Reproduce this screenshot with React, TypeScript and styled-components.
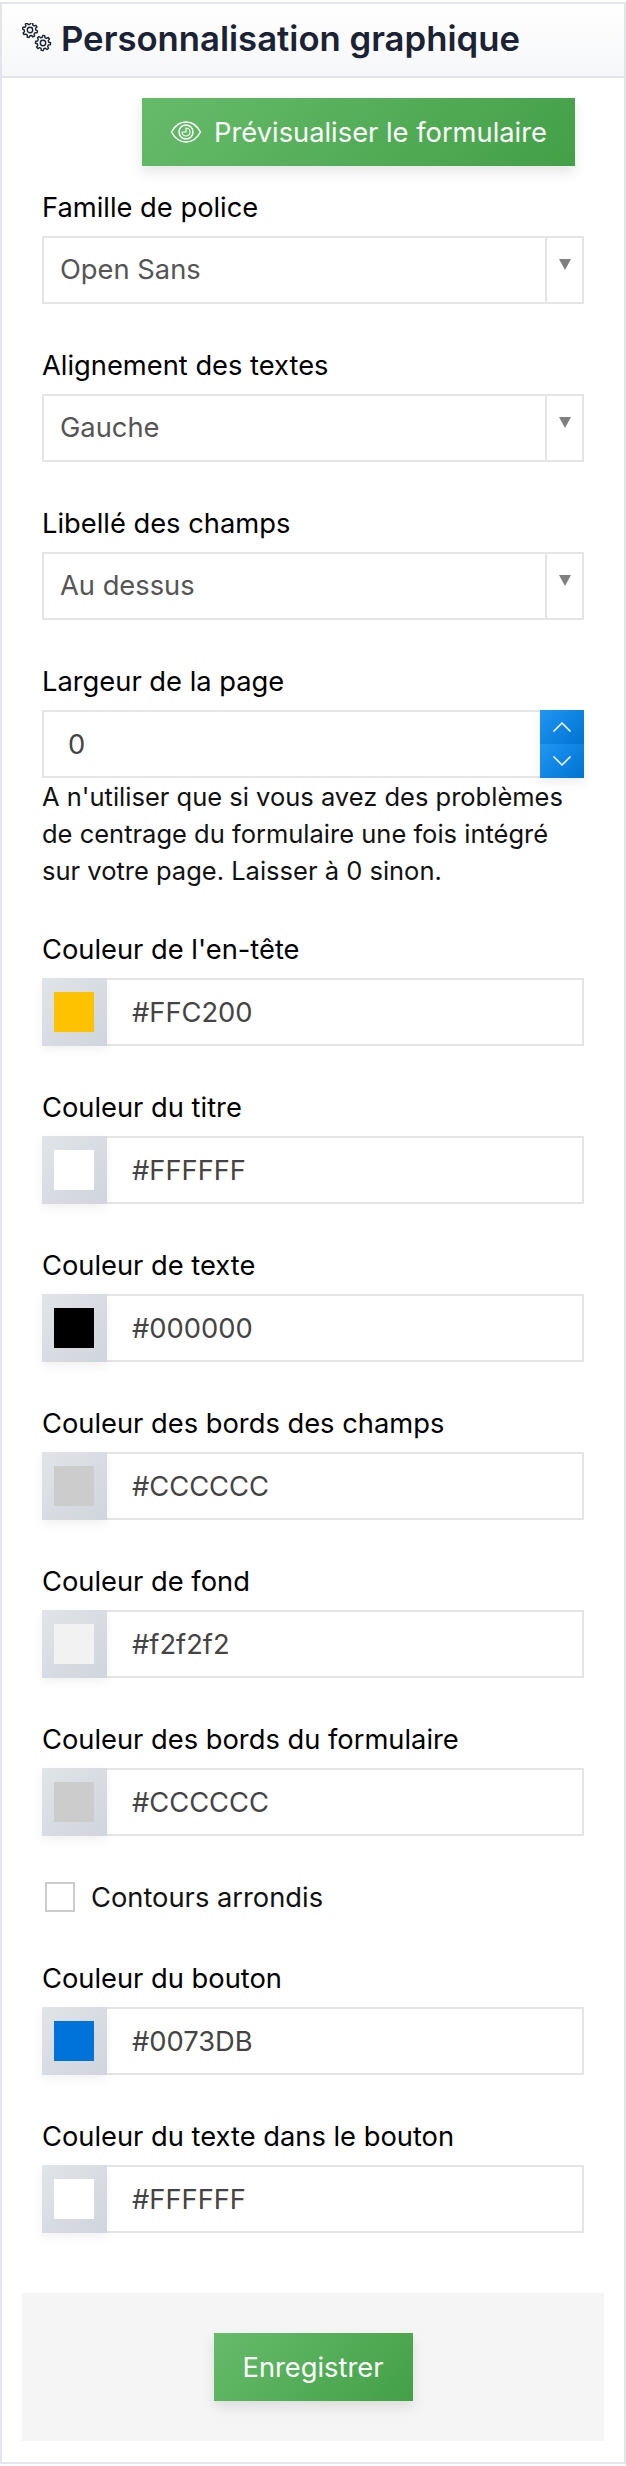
import styled, { createGlobalStyle } from "styled-components";

const GlobalStyle = createGlobalStyle`
  html, body {
    margin: 0;
    padding: 0;
    background: #fff;
  }
  * {
    box-sizing: border-box;
  }
  body {
    font-family: Inter, "Liberation Sans", sans-serif;
  }
`;

const colorFields = [
  { label: "Couleur de l'en-tête", value: "#FFC200" },
  { label: "Couleur du titre", value: "#FFFFFF" },
  { label: "Couleur de texte", value: "#000000" },
  { label: "Couleur des bords des champs", value: "#CCCCCC" },
  { label: "Couleur de fond", value: "#f2f2f2" },
  { label: "Couleur des bords du formulaire", value: "#CCCCCC" },
];

const buttonColorFields = [
  { label: "Couleur du bouton", value: "#0073DB" },
  { label: "Couleur du texte dans le bouton", value: "#FFFFFF" },
];

function gearPath(cx: number, cy: number, outer: number, inner: number, offset: number) {
  const teeth = 8;
  const points: string[] = [];
  for (let i = 0; i < teeth; i++) {
    const step = (Math.PI * 2) / teeth;
    const base = offset + i * step;
    const corners = [
      [inner, base - step * 0.3],
      [outer, base - step * 0.17],
      [outer, base + step * 0.17],
      [inner, base + step * 0.3],
    ];
    corners.forEach(([r, a]) => {
      points.push(`${(cx + r * Math.cos(a)).toFixed(2)} ${(cy + r * Math.sin(a)).toFixed(2)}`);
    });
  }
  return `M${points.join("L")}Z`;
}

function GearsIcon() {
  return (
    <GearsSvg viewBox="0 0 34 34" fill="none" stroke="#1a2233" strokeWidth="1.4" strokeLinejoin="round">
      <path d={gearPath(8, 7, 7.6, 5.8, 0.25)} />
      <circle cx="8" cy="7" r="2.7" />
      <path d={gearPath(21, 20, 7.6, 5.8, 0.1)} />
      <circle cx="21" cy="20" r="2.7" />
    </GearsSvg>
  );
}

function EyeIcon() {
  return (
    <EyeSvg viewBox="0 0 32 24" fill="none" stroke="#fff" strokeWidth="1.5" strokeLinecap="round">
      <path d="M1.5 12C5 5.5 10 2 16 2s11 3.5 14.5 10C27 18.5 22 22 16 22S5 18.5 1.500 12z" />
      <circle cx="16" cy="12" r="7" />
      <path d="M16 8a4 4 0 1 1-4 4h4z" strokeWidth="1.2" />
    </EyeSvg>
  );
}

function SelectGroup({ label, value }: { label: string; value: string }) {
  return (
    <Group>
      <Label>{label}</Label>
      <SelectBox>
        <SelectValue>{value}</SelectValue>
        <SelectArrow>
          <Triangle />
        </SelectArrow>
      </SelectBox>
    </Group>
  );
}

function ColorGroup({ label, value }: { label: string; value: string }) {
  return (
    <Group>
      <Label>{label}</Label>
      <ColorBox>
        <SwatchHolder>
          <Swatch $color={value} />
        </SwatchHolder>
        <ColorValue>{value}</ColorValue>
      </ColorBox>
    </Group>
  );
}

export default function App() {
  return (
    <Page>
      <GlobalStyle />
      <Card>
        <Header>
          <GearsIcon />
          <Title>Personnalisation graphique</Title>
        </Header>
        <Body>
          <Form>
            <PreviewRow>
              <GreenButton $wide>
                <EyeIcon />
                Prévisualiser le formulaire
              </GreenButton>
            </PreviewRow>
            <SelectGroup label="Famille de police" value="Open Sans" />
            <SelectGroup label="Alignement des textes" value="Gauche" />
            <SelectGroup label="Libellé des champs" value="Au dessus" />
            <Group>
              <Label>Largeur de la page</Label>
              <NumberBox>
                <NumberValue>0</NumberValue>
                <Spinner>
                  <SpinButton>
                    <svg width="20" height="12" viewBox="0 0 20 12" fill="none" stroke="#fff" strokeWidth="1.5">
                      <path d="M1.5 10.5L10 2l8.5 8.5" />
                    </svg>
                  </SpinButton>
                  <SpinButton>
                    <svg width="20" height="12" viewBox="0 0 20 12" fill="none" stroke="#fff" strokeWidth="1.5">
                      <path d="M1.5 1.5L10 10l8.5-8.5" />
                    </svg>
                  </SpinButton>
                </Spinner>
              </NumberBox>
              <Help>
                A n'utiliser que si vous avez des problèmes
                <br />
                de centrage du formulaire une fois intégré
                <br />
                sur votre page. Laisser à 0 sinon.
              </Help>
            </Group>
            {colorFields.map((field) => (
              <ColorGroup key={field.label} label={field.label} value={field.value} />
            ))}
            <CheckRow>
              <CheckBox />
              Contours arrondis
            </CheckRow>
            {buttonColorFields.map((field) => (
              <ColorGroup key={field.label} label={field.label} value={field.value} />
            ))}
          </Form>
          <Footer>
            <GreenButton>Enregistrer</GreenButton>
          </Footer>
        </Body>
      </Card>
    </Page>
  );
}

const Page = styled.div`
  width: 626px;
  height: 2466px;
  padding-top: 2px;
  overflow: hidden;
`;

const Card = styled.div`
  border: 2px solid #e2e5ea;
  background: #fff;
  height: 2462px;
`;

const Header = styled.div`
  height: 74px;
  display: flex;
  align-items: center;
  padding-left: 20px;
  gap: 5px;
  border-bottom: 2px solid #e2e5ea;
  background: linear-gradient(180deg, #fff 0%, #f6f7f9 100%);
`;

const GearsSvg = styled.svg`
  width: 34px;
  height: 34px;
  flex: none;
`;

const Title = styled.h1`
  margin: 0 0 4px;
  font-size: 34.7px;
  font-weight: 600;
  line-height: 40px;
  color: #1a2233;
`;

const Body = styled.div`
  padding: 0 20px 20px;
`;

const Form = styled.div`
  padding: 20px 19px 0 20px;
`;

const PreviewRow = styled.div`
  display: flex;
  justify-content: flex-end;
  padding-right: 10px;
  margin-bottom: 24px;
`;

const GreenButton = styled.button<{ $wide?: boolean }>`
  height: 68px;
  width: ${({ $wide }) => ($wide ? "433px" : "199px")};
  display: flex;
  align-items: center;
  justify-content: center;
  gap: 12px;
  border: none;
  padding: 0;
  font-family: inherit;
  font-size: 27.3px;
  font-weight: 400;
  color: #fff;
  background: linear-gradient(135deg, #66bb6a 0%, #43a047 100%);
  box-shadow: 0 6px 12px rgba(0, 0, 0, 0.1);
`;

const EyeSvg = styled.svg`
  width: 32px;
  height: 24px;
  flex: none;
`;

const Group = styled.div`
  margin-bottom: 44px;
`;

const Label = styled.div`
  font-size: 27.3px;
  line-height: 36px;
  height: 36px;
  margin-bottom: 10px;
  color: #000;
`;

const SelectBox = styled.div`
  height: 68px;
  width: 542px;
  display: flex;
  border: 2px solid #e5e5e5;
`;

const SelectValue = styled.div`
  flex: 1;
  display: flex;
  align-items: center;
  padding: 0 0 2px 16px;
  font-size: 27.3px;
  color: #555;
`;

const SelectArrow = styled.div`
  width: 37px;
  display: flex;
  justify-content: center;
  padding-top: 21px;
  border-left: 2px solid #e5e5e5;
`;

const Triangle = styled.div`
  width: 0;
  height: 0;
  border-left: 6.5px solid transparent;
  border-right: 6.5px solid transparent;
  border-top: 11px solid #808080;
`;

const NumberBox = styled.div`
  height: 68px;
  width: 542px;
  display: flex;
`;

const NumberValue = styled.div`
  flex: 1;
  display: flex;
  align-items: center;
  padding-left: 24px;
  font-size: 27.3px;
  color: #444;
  border: 2px solid #e5e5e5;
  border-right: none;
`;

const Spinner = styled.div`
  width: 44px;
  display: flex;
  flex-direction: column;
  box-shadow: 0 4px 10px rgba(0, 0, 0, 0.08);
`;

const SpinButton = styled.div`
  flex: 1;
  display: flex;
  align-items: center;
  justify-content: center;
  background: linear-gradient(135deg, #2196f3 0%, #0073d3 100%);
`;

const Help = styled.p`
  margin: 0 0 -1px;
  font-size: 25.5px;
  line-height: 37px;
  color: #111;
  white-space: nowrap;
`;

const ColorBox = styled.div`
  height: 68px;
  width: 542px;
  display: flex;
  border: 2px solid #e5e5e5;
`;

const SwatchHolder = styled.div`
  width: 65px;
  margin: -2px 0 -2px -2px;
  display: flex;
  align-items: center;
  justify-content: center;
  padding-right: 1px;
  background: linear-gradient(135deg, #e1e4e8 0%, #d0d4dc 100%);
  box-shadow: 0 4px 10px rgba(0, 0, 0, 0.06);
`;

const Swatch = styled.div<{ $color: string }>`
  width: 40px;
  height: 40px;
  background: ${({ $color }) => $color};
`;

const ColorValue = styled.div`
  flex: 1;
  display: flex;
  align-items: center;
  padding-left: 25px;
  font-size: 27.3px;
  color: #444;
`;

const CheckRow = styled.div`
  height: 34px;
  margin-top: 3px;
  margin-bottom: 47px;
  display: flex;
  align-items: center;
  gap: 16px;
  padding-left: 3px;
  font-size: 27.3px;
  color: #111;
`;

const CheckBox = styled.div`
  width: 30px;
  height: 30px;
  border: 2px solid #ccc;
  background: #fff;
`;

const Footer = styled.div`
  margin-top: 60px;
  height: 148px;
  display: flex;
  align-items: center;
  justify-content: center;
  background: #f5f5f5;
`;
